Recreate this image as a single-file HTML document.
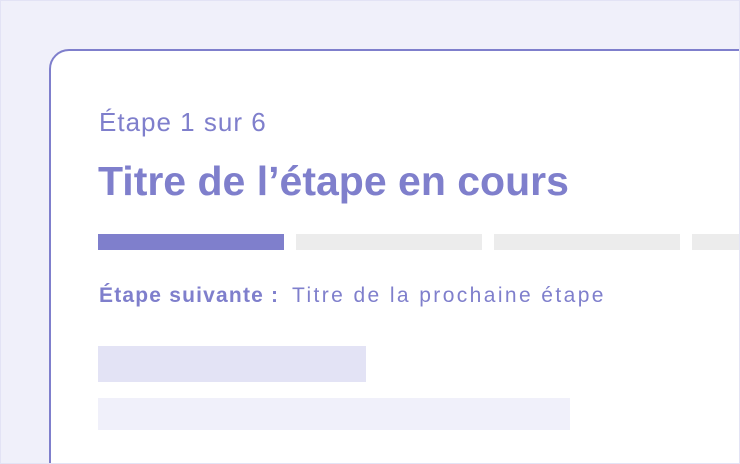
<!DOCTYPE html>
<html><head><meta charset="utf-8"><style>
html,body{margin:0;padding:0}
body{width:740px;height:464px;position:relative;overflow:hidden;background:#f0f0fa;font-family:"Liberation Sans",sans-serif;color:#7f7fcc}
.frame{position:absolute;left:0;top:0;width:740px;height:464px;border:1px solid #e3e3f5;box-sizing:border-box;overflow:hidden}
.card{position:absolute;left:48px;top:48px;width:760px;height:460px;background:#fff;border:2px solid #7f7fcc;border-radius:20px;box-sizing:border-box}
.a{position:absolute;white-space:nowrap;line-height:1}
.bar{position:absolute;top:233px;height:16px;width:186px;background:#ececec}
</style></head><body><div class="frame">
<div class="card"></div>
<div class="a" style="left:98px;top:108px;font-size:26px;letter-spacing:1px">Étape 1 sur 6</div>
<div class="a" style="left:97px;top:160px;font-size:41px;font-weight:bold">Titre de l’étape en cours</div>
<div class="bar" style="left:97px;background:#7f7fcc"></div>
<div class="bar" style="left:295px"></div>
<div class="bar" style="left:493px"></div>
<div class="bar" style="left:691px"></div>
<div class="a" style="left:98px;top:284px;font-size:21px;font-weight:bold;letter-spacing:1.2px">Étape suivante :</div>
<div class="a" style="left:291px;top:284px;font-size:21px;letter-spacing:2.4px">Titre de la prochaine étape</div>
<div class="a" style="left:97px;top:345px;width:268px;height:36px;background:#e3e3f5"></div>
<div class="a" style="left:97px;top:397px;width:472px;height:32px;background:#f0f0fa"></div>
</div></body></html>
